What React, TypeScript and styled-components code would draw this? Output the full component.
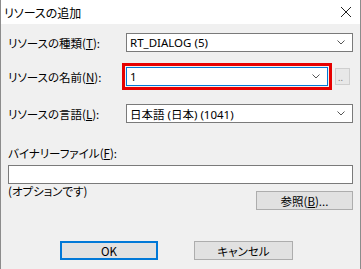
import styled, { createGlobalStyle } from 'styled-components';

const Global = createGlobalStyle`
  html, body { margin: 0; padding: 0; background: #f0f0f0; }
  body {
    font-family: "Noto Sans CJK JP", "Noto Sans", sans-serif;
    font-feature-settings: "palt";
    color: #000;
  }
`;

const Window = styled.div`
  width: 361px;
  height: 269px;
  box-sizing: border-box;
  border-left: 1px solid #8c8c8c;
  border-right: 1px solid #8c8c8c;
  background: #f0f0f0;
  display: flex;
  flex-direction: column;
`;

const TitleBar = styled.div`
  height: 24px;
  background: #fff;
  display: flex;
  align-items: center;
  justify-content: space-between;
  padding: 0 6px 0 3px;
  font-size: 12px;
`;

const CloseIcon = styled.svg`
  width: 12px;
  height: 12px;
  margin-right: 2px;
`;

const Body = styled.div`
  padding: 0 7px;
  display: flex;
  flex-direction: column;
`;

const Row = styled.div<{ $top: number }>`
  display: flex;
  align-items: center;
  margin-top: ${p => p.$top}px;
`;

const Label = styled.div`
  width: 118px;
  flex: none;
  font-size: 11.5px;
  white-space: nowrap;
`;

const Key = styled.span`
  text-decoration: underline;
  text-underline-offset: 1px;
`;

const Combo = styled.div<{ $focused?: boolean; $width?: number }>`
  box-sizing: border-box;
  height: 19px;
  ${p => (p.$width ? `width: ${p.$width}px;` : 'flex: 1;')}
  background: #fff;
  border: 1px solid ${p => (p.$focused ? '#0078d7' : '#7a7a7a')};
  display: flex;
  align-items: center;
  padding: 0 0 0 3px;
  font-family: "Noto Sans", "Noto Sans CJK JP", sans-serif;
  font-size: 11.5px;
`;

const ComboText = styled.span`
  flex: 1;
  white-space: nowrap;
`;

const Chevron = styled.svg`
  width: 8px;
  height: 5px;
  margin-right: 7px;
`;

const Highlight = styled.div`
  margin-left: -4px;
  border: 3px solid #e60000;
  padding: 1px;
  display: flex;
`;

const MiniButton = styled.div`
  box-sizing: border-box;
  width: 15px;
  height: 17px;
  margin-left: 3px;
  background: #e8e8e8;
  border: 1px solid #cfcfcf;
  color: #8a8a8a;
  font-size: 9px;
  line-height: 18px;
  padding-left: 2px;
`;

const FieldLabel = styled.div`
  margin-top: 22px;
  font-size: 11.5px;
  line-height: 16px;
`;

const TextBox = styled.div`
  box-sizing: border-box;
  margin-top: 4px;
  height: 19px;
  background: #fff;
  border: 1px solid #7a7a7a;
`;

const BrowseRow = styled.div`
  display: flex;
  justify-content: space-between;
  align-items: flex-start;
`;

const Note = styled.div`
  font-size: 11.5px;
  line-height: 14px;
`;

const Button = styled.div<{ $default?: boolean; $width: number; $top?: number }>`
  box-sizing: border-box;
  width: ${p => p.$width}px;
  height: 19px;
  margin-top: ${p => p.$top ?? 0}px;
  background: #e1e1e1;
  border: ${p => (p.$default ? '2px solid #0078d7' : '1px solid #adadad')};
  display: flex;
  align-items: center;
  justify-content: center;
  font-size: 11.5px;
`;

const Footer = styled.div`
  display: flex;
  gap: 36px;
  margin-top: 31px;
  padding-left: 52px;
`;

function Arrow() {
  return (
    <Chevron viewBox="0 0 8 5">
      <path d="M0.5 0.5 L4 4 L7.5 0.5" fill="none" stroke="#555" strokeWidth="1" />
    </Chevron>
  );
}

export default function App() {
  return (
    <>
      <Global />
      <Window>
        <TitleBar>
          <span>リソースの追加</span>
          <CloseIcon viewBox="0 0 12 12">
            <path d="M1 1 L11 11 M11 1 L1 11" stroke="#222" strokeWidth="1" />
          </CloseIcon>
        </TitleBar>
        <Body>
          <Row $top={9}>
            <Label>リソースの種類(<Key>T</Key>):</Label>
            <Combo>
              <ComboText>RT_DIALOG (5)</ComboText>
              <Arrow />
            </Combo>
          </Row>
          <Row $top={11}>
            <Label>リソースの名前(<Key>N</Key>):</Label>
            <Highlight>
              <Combo $focused $width={202}>
                <ComboText>1</ComboText>
                <Arrow />
              </Combo>
            </Highlight>
            <MiniButton>..</MiniButton>
          </Row>
          <Row $top={14}>
            <Label>リソースの言語(<Key>L</Key>):</Label>
            <Combo>
              <ComboText>日本語 (日本) (1041)</ComboText>
              <Arrow />
            </Combo>
          </Row>
          <FieldLabel>バイナリーファイル(<Key>F</Key>):</FieldLabel>
          <TextBox />
          <BrowseRow>
            <Note>(オプションです)</Note>
            <Button $width={97} $top={7}>参照(<Key>B</Key>)...</Button>
          </BrowseRow>
          <Footer>
            <Button $default $width={98}>OK</Button>
            <Button $width={99}>キャンセル</Button>
          </Footer>
        </Body>
      </Window>
    </>
  );
}
